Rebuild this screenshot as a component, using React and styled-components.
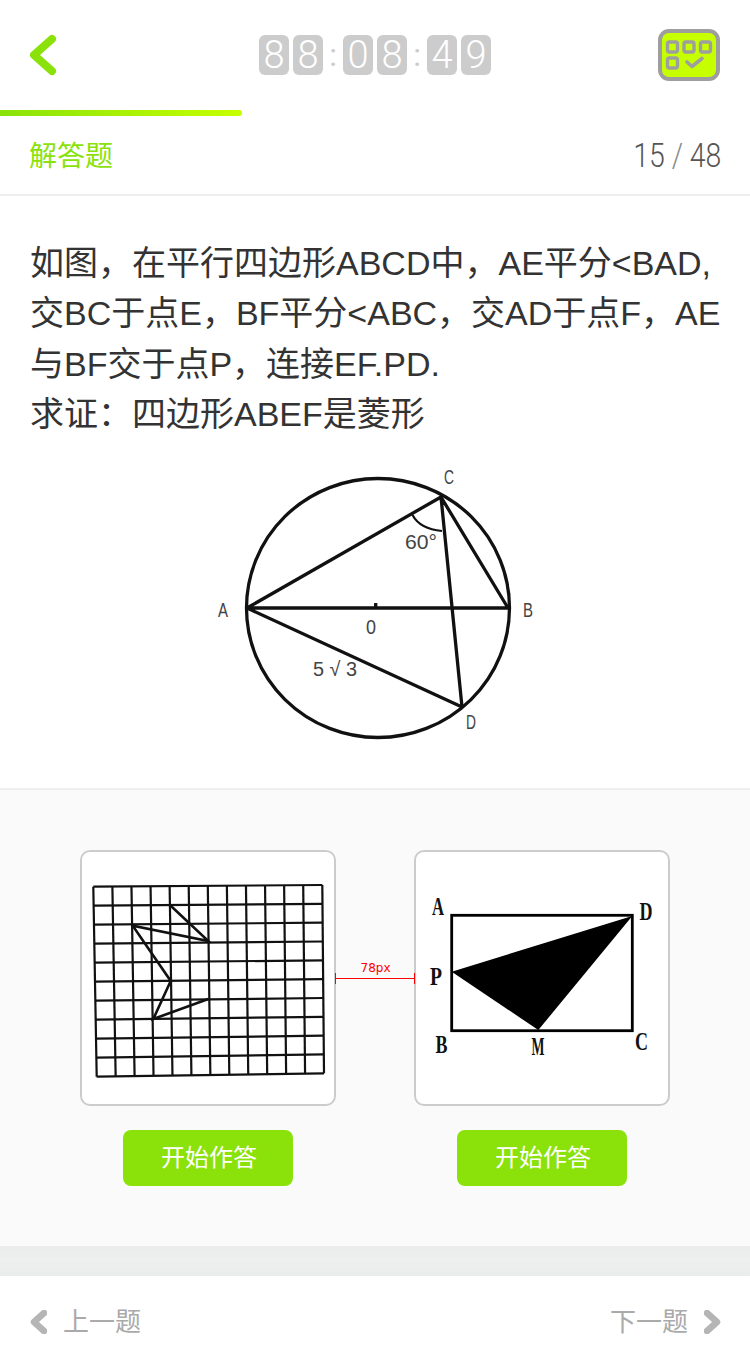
import React from "react";
import styled, { createGlobalStyle } from "styled-components";

const GREEN = "#8ae20a";
const CJK = `"Liberation Sans", "Noto Sans CJK SC", sans-serif`;

const Global = createGlobalStyle`
  html, body { margin: 0; padding: 0; background: #fff; }
  * { box-sizing: border-box; }
`;
const Page = styled.div`
  width: 750px; height: 1367px; overflow: hidden; background: #fff;
  font-family: ${CJK}; display: flex; flex-direction: column;
`;
const Header = styled.header`
  height: 110px; padding: 0 30px; display: grid;
  grid-template-columns: 1fr auto 1fr; align-items: center;
`;
const IconSlot = styled.div`
  display: flex; justify-content: ${(p) => (p.$end ? "flex-end" : "flex-start")}; align-items: center;
`;
const Timer = styled.div`display: flex; align-items: center;`;
const Pair = styled.div`display: flex; gap: 4px;`;
const Tile = styled.span`
  width: 30px; height: 40px; border-radius: 6px; background: #ccc; color: #fff;
  display: flex; align-items: center; justify-content: center;
  font-family: Roboto, sans-serif; font-weight: 300; font-size: 38px; line-height: 40px;
`;
const Colon = styled.span`
  width: 20px; height: 40px; display: flex; align-items: center; justify-content: center;
  color: #ccc; font-family: Roboto, sans-serif; font-weight: 400; font-size: 32px; line-height: 36px;
`;
const ProgressBar = styled.div`
  height: 6px; width: ${(p) => p.$w}px; border-radius: 0 3px 3px 0;
  background: linear-gradient(90deg, #8ae20a, #c6ff00);
`;
const SectionHead = styled.div`
  height: 80px; padding: 3px 29px 0; border-bottom: 2px solid #eee;
  display: flex; align-items: center; justify-content: space-between;
`;
const SectionLabel = styled.span`font-size: 28px; color: ${GREEN}; line-height: 40px;`;
const Counter = styled.span`
  font-family: Roboto, sans-serif; font-weight: 300; padding-bottom: 2px;
  font-size: 33px; color: #555; line-height: 40px; display: flex; gap: 8px; align-items: center;
  transform: scaleX(0.86); transform-origin: right center;
`;
const Slash = styled.span`color: #888;`;
const Question = styled.p`
  margin: 0; padding: 42px 0 0 30px; font-size: 34px; line-height: 50.4px; color: #333; white-space: nowrap;
`;
const Figure = styled.div`
  height: 348px; flex: none; display: flex; justify-content: center;
`;
const Panel = styled.section`
  background: #fafafa; border-top: 2px solid #eee; padding: 60px 80px;
  display: flex; gap: 78px; position: relative;
`;
const Option = styled.div`
  width: 256px; display: flex; flex-direction: column; align-items: center; gap: 24px;
`;
const Card = styled.div`
  width: 256px; height: 256px; border: 2px solid #ccc; border-radius: 10px; background: #fff;
  display: flex;
`;
const StartButton = styled.button`
  width: 170px; height: 56px; border: 0; border-radius: 8px; background: ${GREEN}; color: #fff;
  font-family: ${CJK}; font-size: 24px; padding: 0 0 4px 2px;
`;
const Measure = styled.div`
  position: absolute; left: 335px; top: 183px; width: 80px; height: 11px;
  border-left: 1px solid #f00; border-right: 1px solid #f00;
  &::after { content: ""; position: absolute; left: 0; right: 0; top: 5px; height: 1px; background: #f00; }
`;
const MeasureText = styled.span`
  position: absolute; left: 1px; right: 0; top: -12px; text-align: center;
  font-family: "DejaVu Sans", sans-serif; font-size: 12px; line-height: 14px; color: #f00;
`;
const Strip = styled.div`
  height: 30px; flex: none; background: linear-gradient(180deg, #e9ecea 0, #eef0ef 50%, #e9ecea 100%);
`;
const Footer = styled.footer`
  flex: 1; padding: 28px 29px 0 30px; display: flex; justify-content: space-between; align-items: flex-start;
`;
const NavLink = styled.div`
  display: flex; align-items: center; gap: 16px;
  font-size: 26px; line-height: 36px; color: #aaa;
`;

const DiagramText = styled.text`
  font-family: "Liberation Sans", sans-serif; font-size: 20px; fill: #444; text-anchor: middle;
`;
const SerifLabel = styled.text`
  font-family: "Liberation Serif", serif; font-weight: 700; font-size: 25px; fill: #111; text-anchor: middle;
`;

const Back = () => (
  <svg width="30" height="44" viewBox="0 0 30 44">
    <polyline points="22,6 4,22 22,38" fill="none" stroke={GREEN} strokeWidth="8" strokeLinecap="round" strokeLinejoin="round" />
  </svg>
);
const SheetIcon = () => (
  <svg width="62" height="52" viewBox="0 0 62 52">
    <rect x="2" y="2" width="58" height="48" rx="9" fill="#c6ff00" stroke="#9e9e9e" strokeWidth="4" />
    <g fill="none" stroke="#9e9e9e" strokeWidth="3.4">
      <rect x="9.5" y="13" width="10" height="10" rx="2" />
      <rect x="26" y="13" width="10" height="10" rx="2" />
      <rect x="42.5" y="13" width="10" height="10" rx="2" />
      <rect x="9.5" y="29" width="10" height="10" rx="2" />
      <polyline points="29,33 34,37.5 44,29.5" strokeWidth="3.6" strokeLinecap="round" strokeLinejoin="round" />
    </g>
  </svg>
);
const Chevron = ({ right }) => (
  <svg width="17" height="24" viewBox="0 0 17 24">
    <polyline
      points={right ? "3,3 13,12 3,21" : "14,3 4,12 14,21"}
      fill="none" stroke="#b5b5b5" strokeWidth="6.5" strokeLinecap="round" strokeLinejoin="round"
    />
  </svg>
);

const CircleFigure = () => (
  <svg width="340" height="348" viewBox="205 440 340 348">
    <g fill="none" stroke="#111" strokeWidth="3.3">
      <ellipse cx="378" cy="608" rx="131.5" ry="129.5" />
      <polyline points="247,608 441,497 508,608 247,608 462,707 441,497" strokeLinejoin="round" />
      <path d="M412.5 515 Q420 529 442 531" strokeWidth="2.2" />
      <line x1="375.7" y1="603" x2="375.7" y2="608" />
    </g>
    <DiagramText x="421" y="549" textLength="32" lengthAdjust="spacingAndGlyphs">60°</DiagramText>
    <DiagramText x="371" y="634" textLength="10" lengthAdjust="spacingAndGlyphs">0</DiagramText>
    <DiagramText x="335" y="676" textLength="44" lengthAdjust="spacingAndGlyphs">5 √ 3</DiagramText>
    <DiagramText x="223" y="617" textLength="10" lengthAdjust="spacingAndGlyphs">A</DiagramText>
    <DiagramText x="528" y="617" textLength="10" lengthAdjust="spacingAndGlyphs">B</DiagramText>
    <DiagramText x="449" y="484" textLength="10" lengthAdjust="spacingAndGlyphs">C</DiagramText>
    <DiagramText x="471" y="729" textLength="10" lengthAdjust="spacingAndGlyphs">D</DiagramText>
  </svg>
);

const COLS = 12, ROWS = 10;
const TL = [93.3, 886.7], TR = [322.3, 885], BL = [96.7, 1076.7], BR = [324, 1073.3];
const pt = (u, v) => [
  (1 - v) * ((1 - u) * TL[0] + u * TR[0]) + v * ((1 - u) * BL[0] + u * BR[0]),
  (1 - v) * ((1 - u) * TL[1] + u * TR[1]) + v * ((1 - u) * BL[1] + u * BR[1]),
];
const gridLines = [
  ...Array.from({ length: COLS + 1 }, (_, i) => [pt(i / COLS, 0), pt(i / COLS, 1)]),
  ...Array.from({ length: ROWS + 1 }, (_, j) => [pt(0, j / ROWS), pt(1, j / ROWS)]),
];

const GridFigure = () => (
  <svg width="252" height="252" viewBox="82 852 252 252">
    <g stroke="#111" strokeWidth="2.2" fill="none">
      {gridLines.map(([a, b], i) => (
        <line key={i} x1={a[0]} y1={a[1]} x2={b[0]} y2={b[1]} />
      ))}
      <polyline
        points="170.7,905.7 208.3,941 132.7,925.7 170.7,981 153.3,1019 208.3,999"
        strokeWidth="2.6"
      />
    </g>
  </svg>
);

const RectFigure = () => (
  <svg width="252" height="252" viewBox="416 852 252 252">
    <rect x="451.7" y="915.3" width="180.6" height="115.4" fill="none" stroke="#000" strokeWidth="2.8" />
    <polygon points="451.7,971.7 632.3,916 538.3,1030" fill="#000" />
    <SerifLabel x="438" y="915" textLength="12" lengthAdjust="spacingAndGlyphs">A</SerifLabel>
    <SerifLabel x="646" y="920" textLength="13" lengthAdjust="spacingAndGlyphs">D</SerifLabel>
    <SerifLabel x="436" y="985" textLength="12" lengthAdjust="spacingAndGlyphs">P</SerifLabel>
    <SerifLabel x="441.5" y="1053" textLength="12" lengthAdjust="spacingAndGlyphs">B</SerifLabel>
    <SerifLabel x="538" y="1055" textLength="13" lengthAdjust="spacingAndGlyphs">M</SerifLabel>
    <SerifLabel x="641.5" y="1050" textLength="13" lengthAdjust="spacingAndGlyphs">C</SerifLabel>
  </svg>
);

export default function App() {
  return (
    <Page>
      <Global />
      <Header>
        <IconSlot><Back /></IconSlot>
        <Timer>
          <Pair><Tile>8</Tile><Tile>8</Tile></Pair>
          <Colon>:</Colon>
          <Pair><Tile>0</Tile><Tile>8</Tile></Pair>
          <Colon>:</Colon>
          <Pair><Tile>4</Tile><Tile>9</Tile></Pair>
        </Timer>
        <IconSlot $end><SheetIcon /></IconSlot>
      </Header>
      <ProgressBar $w={242} />
      <SectionHead>
        <SectionLabel>解答题</SectionLabel>
        <Counter>15<Slash>/</Slash>48</Counter>
      </SectionHead>
      <Question>
        如图，在平行四边形ABCD中，AE平分&lt;BAD,<br />
        交BC于点E，BF平分&lt;ABC，交AD于点F，AE<br />
        与BF交于点P，连接EF.PD.<br />
        求证：四边形ABEF是菱形
      </Question>
      <Figure><CircleFigure /></Figure>
      <Panel>
        <Option>
          <Card><GridFigure /></Card>
          <StartButton>开始作答</StartButton>
        </Option>
        <Measure><MeasureText>78px</MeasureText></Measure>
        <Option>
          <Card><RectFigure /></Card>
          <StartButton>开始作答</StartButton>
        </Option>
      </Panel>
      <Strip />
      <Footer>
        <NavLink><Chevron />上一题</NavLink>
        <NavLink>下一题<Chevron right /></NavLink>
      </Footer>
    </Page>
  );
}
